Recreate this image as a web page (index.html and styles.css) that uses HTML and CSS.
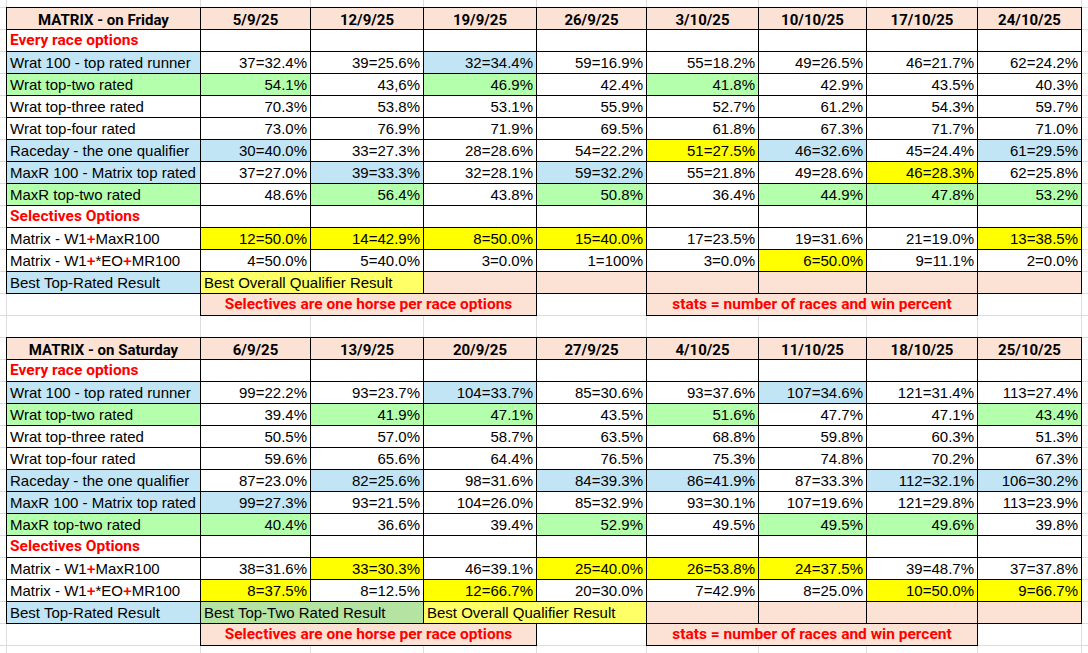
FILE: index.html
```html
<!DOCTYPE html>
<html>
<head>
<meta charset="utf-8">
<link rel="stylesheet" href="styles.css">
</head>
<body>
<div class="sheet">
  <!-- Friday table -->
  <div class="c hd">MATRIX - on Friday</div>
  <div class="c hd">5/9/25</div><div class="c hd">12/9/25</div><div class="c hd">19/9/25</div><div class="c hd">26/9/25</div>
  <div class="c hd">3/10/25</div><div class="c hd">10/10/25</div><div class="c hd">17/10/25</div><div class="c hd">24/10/25</div>

  <div class="c sec">Every race options</div>
  <div class="c"></div><div class="c"></div><div class="c"></div><div class="c"></div><div class="c"></div><div class="c"></div><div class="c"></div><div class="c"></div>

  <div class="c bl">Wrat 100 - top rated runner</div>
  <div class="c n">37=32.4%</div><div class="c n">39=25.6%</div><div class="c n bl">32=34.4%</div><div class="c n">59=16.9%</div>
  <div class="c n">55=18.2%</div><div class="c n">49=26.5%</div><div class="c n">46=21.7%</div><div class="c n">62=24.2%</div>

  <div class="c gr">Wrat top-two rated</div>
  <div class="c n gr">54.1%</div><div class="c n">43,6%</div><div class="c n gr">46.9%</div><div class="c n">42.4%</div>
  <div class="c n gr">41.8%</div><div class="c n">42.9%</div><div class="c n">43.5%</div><div class="c n">40.3%</div>

  <div class="c">Wrat top-three rated</div>
  <div class="c n">70.3%</div><div class="c n">53.8%</div><div class="c n">53.1%</div><div class="c n">55.9%</div>
  <div class="c n">52.7%</div><div class="c n">61.2%</div><div class="c n">54.3%</div><div class="c n">59.7%</div>

  <div class="c">Wrat top-four rated</div>
  <div class="c n">73.0%</div><div class="c n">76.9%</div><div class="c n">71.9%</div><div class="c n">69.5%</div>
  <div class="c n">61.8%</div><div class="c n">67.3%</div><div class="c n">71.7%</div><div class="c n">71.0%</div>

  <div class="c bl">Raceday - the one qualifier</div>
  <div class="c n bl">30=40.0%</div><div class="c n">33=27.3%</div><div class="c n">28=28.6%</div><div class="c n">54=22.2%</div>
  <div class="c n ye">51=27.5%</div><div class="c n bl">46=32.6%</div><div class="c n">45=24.4%</div><div class="c n bl">61=29.5%</div>

  <div class="c bl">MaxR 100 - Matrix top rated</div>
  <div class="c n">37=27.0%</div><div class="c n bl">39=33.3%</div><div class="c n">32=28.1%</div><div class="c n bl">59=32.2%</div>
  <div class="c n">55=21.8%</div><div class="c n">49=28.6%</div><div class="c n ye">46=28.3%</div><div class="c n">62=25.8%</div>

  <div class="c gr">MaxR top-two rated</div>
  <div class="c n">48.6%</div><div class="c n gr">56.4%</div><div class="c n">43.8%</div><div class="c n gr">50.8%</div>
  <div class="c n">36.4%</div><div class="c n gr">44.9%</div><div class="c n gr">47.8%</div><div class="c n gr">53.2%</div>

  <div class="c sec">Selectives Options</div>
  <div class="c"></div><div class="c"></div><div class="c"></div><div class="c"></div><div class="c"></div><div class="c"></div><div class="c"></div><div class="c"></div>

  <div class="c">Matrix - W1<span class="plus">+</span>MaxR100</div>
  <div class="c n ye">12=50.0%</div><div class="c n ye">14=42.9%</div><div class="c n ye">8=50.0%</div><div class="c n ye">15=40.0%</div>
  <div class="c n">17=23.5%</div><div class="c n">19=31.6%</div><div class="c n">21=19.0%</div><div class="c n ye">13=38.5%</div>

  <div class="c">Matrix - W1<span class="plus">+</span>*EO<span class="plus">+</span>MR100</div>
  <div class="c n">4=50.0%</div><div class="c n">5=40.0%</div><div class="c n">3=0.0%</div><div class="c n">1=100%</div>
  <div class="c n">3=0.0%</div><div class="c n ye">6=50.0%</div><div class="c n">9=11.1%</div><div class="c n">2=0.0%</div>

  <div class="c bl">Best Top-Rated Result</div>
  <div class="c ly span2">Best Overall Qualifier Result</div>
  <div class="c pe"></div><div class="c pe"></div><div class="c pe"></div><div class="c pe"></div><div class="c pe"></div><div class="c pe"></div>

  <div class="e"></div>
  <div class="c pe note span3">Selectives are one horse per race options</div>
  <div class="e"></div>
  <div class="c pe note span3">stats = number of races and win percent</div>
  <div class="e"></div>

  <div class="blank"></div>

  <!-- Saturday table -->
  <div class="c hd">MATRIX - on Saturday</div>
  <div class="c hd">6/9/25</div><div class="c hd">13/9/25</div><div class="c hd">20/9/25</div><div class="c hd">27/9/25</div>
  <div class="c hd">4/10/25</div><div class="c hd">11/10/25</div><div class="c hd">18/10/25</div><div class="c hd">25/10/25</div>

  <div class="c sec">Every race options</div>
  <div class="c"></div><div class="c"></div><div class="c"></div><div class="c"></div><div class="c"></div><div class="c"></div><div class="c"></div><div class="c"></div>

  <div class="c bl">Wrat 100 - top rated runner</div>
  <div class="c n">99=22.2%</div><div class="c n">93=23.7%</div><div class="c n bl">104=33.7%</div><div class="c n">85=30.6%</div>
  <div class="c n">93=37.6%</div><div class="c n bl">107=34.6%</div><div class="c n">121=31.4%</div><div class="c n">113=27.4%</div>

  <div class="c gr">Wrat top-two rated</div>
  <div class="c n">39.4%</div><div class="c n gr">41.9%</div><div class="c n gr">47.1%</div><div class="c n">43.5%</div>
  <div class="c n gr">51.6%</div><div class="c n">47.7%</div><div class="c n">47.1%</div><div class="c n gr">43.4%</div>

  <div class="c">Wrat top-three rated</div>
  <div class="c n">50.5%</div><div class="c n">57.0%</div><div class="c n">58.7%</div><div class="c n">63.5%</div>
  <div class="c n">68.8%</div><div class="c n">59.8%</div><div class="c n">60.3%</div><div class="c n">51.3%</div>

  <div class="c">Wrat top-four rated</div>
  <div class="c n">59.6%</div><div class="c n">65.6%</div><div class="c n">64.4%</div><div class="c n">76.5%</div>
  <div class="c n">75.3%</div><div class="c n">74.8%</div><div class="c n">70.2%</div><div class="c n">67.3%</div>

  <div class="c bl">Raceday - the one qualifier</div>
  <div class="c n">87=23.0%</div><div class="c n bl">82=25.6%</div><div class="c n">98=31.6%</div><div class="c n bl">84=39.3%</div>
  <div class="c n bl">86=41.9%</div><div class="c n">87=33.3%</div><div class="c n bl">112=32.1%</div><div class="c n bl">106=30.2%</div>

  <div class="c bl">MaxR 100 - Matrix top rated</div>
  <div class="c n bl">99=27.3%</div><div class="c n">93=21.5%</div><div class="c n">104=26.0%</div><div class="c n">85=32.9%</div>
  <div class="c n">93=30.1%</div><div class="c n">107=19.6%</div><div class="c n">121=29.8%</div><div class="c n">113=23.9%</div>

  <div class="c gr">MaxR top-two rated</div>
  <div class="c n gr">40.4%</div><div class="c n">36.6%</div><div class="c n">39.4%</div><div class="c n gr">52.9%</div>
  <div class="c n">49.5%</div><div class="c n gr">49.5%</div><div class="c n gr">49.6%</div><div class="c n">39.8%</div>

  <div class="c sec">Selectives Options</div>
  <div class="c"></div><div class="c"></div><div class="c"></div><div class="c"></div><div class="c"></div><div class="c"></div><div class="c"></div><div class="c"></div>

  <div class="c">Matrix - W1<span class="plus">+</span>MaxR100</div>
  <div class="c n">38=31.6%</div><div class="c n ye">33=30.3%</div><div class="c n">46=39.1%</div><div class="c n ye">25=40.0%</div>
  <div class="c n ye">26=53.8%</div><div class="c n ye">24=37.5%</div><div class="c n">39=48.7%</div><div class="c n">37=37.8%</div>

  <div class="c">Matrix - W1<span class="plus">+</span>*EO<span class="plus">+</span>MR100</div>
  <div class="c n ye">8=37.5%</div><div class="c n">8=12.5%</div><div class="c n ye">12=66.7%</div><div class="c n">20=30.0%</div>
  <div class="c n">7=42.9%</div><div class="c n">8=25.0%</div><div class="c n ye">10=50.0%</div><div class="c n ye">9=66.7%</div>

  <div class="c bl">Best Top-Rated Result</div>
  <div class="c dg span2">Best Top-Two Rated Result</div>
  <div class="c ly span2">Best Overall Qualifier Result</div>
  <div class="c pe"></div><div class="c pe"></div><div class="c pe"></div><div class="c pe"></div>

  <div class="e"></div>
  <div class="c pe note span3">Selectives are one horse per race options</div>
  <div class="e"></div>
  <div class="c pe note span3">stats = number of races and win percent</div>
  <div class="e"></div>
</div>
</body>
</html>
```

FILE: styles.css
```css
html, body {
  margin: 0;
  padding: 0;
}

body {
  width: 1088px;
  height: 653px;
  overflow: hidden;
  background-color: #ffffff;
  background-image:
    linear-gradient(#dcdcdc, #dcdcdc),
    linear-gradient(#dcdcdc, #dcdcdc),
    linear-gradient(#dcdcdc, #dcdcdc),
    linear-gradient(#dcdcdc, #dcdcdc),
    linear-gradient(#dcdcdc, #dcdcdc),
    linear-gradient(#dcdcdc, #dcdcdc),
    linear-gradient(#dcdcdc, #dcdcdc),
    linear-gradient(#dcdcdc, #dcdcdc),
    linear-gradient(#dcdcdc, #dcdcdc),
    linear-gradient(#dcdcdc, #dcdcdc),
    linear-gradient(to bottom, transparent 21px, #dcdcdc 21px);
  background-size:
    1px 100%, 1px 100%, 1px 100%, 1px 100%, 1px 100%,
    1px 100%, 1px 100%, 1px 100%, 1px 100%, 1px 100%,
    100% 22px;
  background-position:
    6px 0, 200px 0, 310px 0, 423px 0, 536px 0,
    646px 0, 758px 0, 866px 0, 977px 0, 1081px 0,
    0 8px;
  background-repeat:
    no-repeat, no-repeat, no-repeat, no-repeat, no-repeat,
    no-repeat, no-repeat, no-repeat, no-repeat, no-repeat,
    repeat-y;
  font-family: "Liberation Sans", Arial, sans-serif;
  font-size: 15px;
  color: #000;
}

.sheet {
  display: grid;
  grid-template-columns: 194px 110px 113px 113px 110px 112px 108px 111px 104px;
  grid-auto-rows: 22px;
  padding: 8px 0 0 7px;
}

.c {
  border: 1px solid #000;
  margin: -1px 0 0 -1px;
  background: #ffffff;
  padding: 1px 3px 0;
  line-height: 20px;
  white-space: nowrap;
}

.e {
  background: transparent;
}

.blank {
  grid-column: 1 / -1;
}

.n {
  text-align: right;
}

.hd {
  background: #fbe2d5;
  font-family: Roboto, "Liberation Sans", Arial, sans-serif;
  font-weight: 700;
  font-size: 15px;
  text-align: center;
  padding-top: 2px;
  line-height: 20px;
}

.sec {
  color: #ff0000;
  font-family: Roboto, "Liberation Sans", Arial, sans-serif;
  font-weight: 700;
  font-size: 15.5px;
  padding-top: 0;
  line-height: 21px;
}

.note {
  color: #ff0000;
  font-family: Roboto, "Liberation Sans", Arial, sans-serif;
  font-weight: 700;
  font-size: 15.5px;
  text-align: center;
  padding-top: 0;
  line-height: 21px;
}

.plus {
  color: #ff0000;
  font-weight: 700;
}

.span2 {
  grid-column: span 2;
}

.span3 {
  grid-column: span 3;
}

.bl { background: #c1e5f5; }
.gr { background: #b4ffac; }
.ye { background: #ffff00; }
.ly { background: #ffff66; }
.dg { background: #b5e3a1; }
.pe { background: #fbe2d5; }
```
